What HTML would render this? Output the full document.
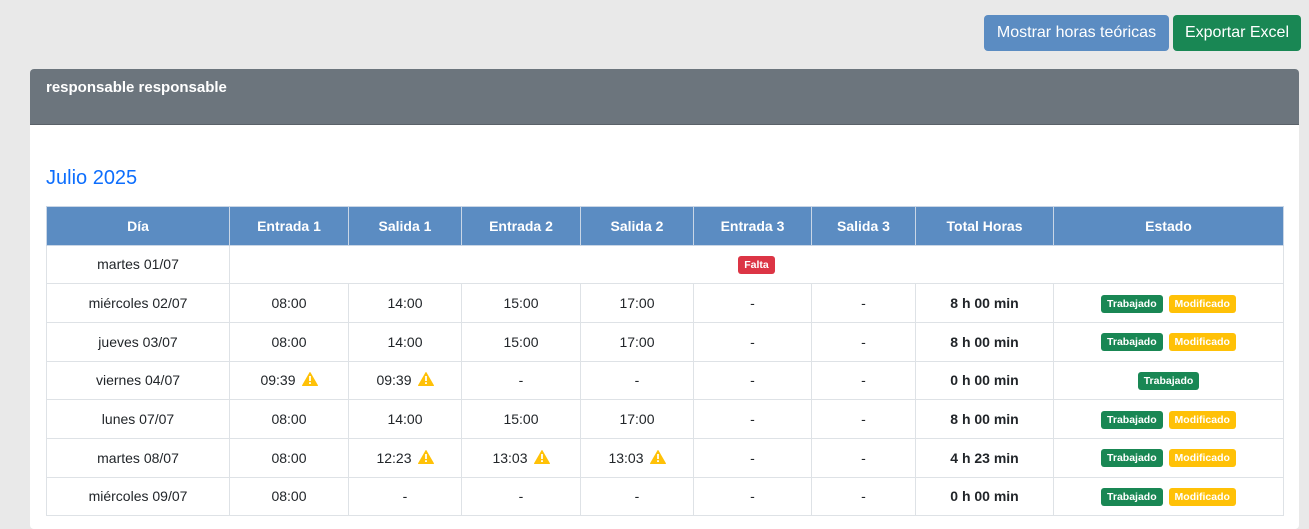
<!DOCTYPE html>
<html><head><meta charset="utf-8"><style>
body{margin:0;background:#e9e9e9;font-family:"Liberation Sans",Arial,sans-serif;width:1309px;height:516px;overflow:hidden;position:relative}
.btn{position:absolute;top:15px;height:36px;border-radius:4px;color:#fff;font-size:16px;line-height:36px;text-align:center}
.card{position:absolute;left:30px;top:69px;width:1269px;height:460px;background:#fff;border-radius:4px;overflow:hidden}
.ch{height:56px;background:#6c757d;color:#fff;font-weight:bold;font-size:15px;padding:10px 16px;box-sizing:border-box;border-bottom:1px solid #5a6168}
h2{position:absolute;left:16px;top:98px;margin:0;font-weight:normal;color:#0d6efd;font-size:20px}
table{position:absolute;left:16px;top:137px;border-collapse:collapse;width:1237px;font-size:14px;color:#212529;table-layout:fixed}
td,th{border:1px solid #dee2e6;text-align:center;height:38.7px;padding:0;box-sizing:border-box}
th{background:#5b8cc2;color:#fff;font-size:14px;border-color:#c9d6e6;height:38.5px}
.b{font-weight:bold}
.bd{display:inline-block;font-size:10.5px;font-weight:bold;color:#fff;border-radius:3px;padding:3px 6px;line-height:12px;margin:0 1px}
.g{background:#198754}.y{background:#ffc107}.r{background:#dc3545}
.w{display:inline-block;width:16px;height:14px;vertical-align:-1px;margin-left:6px}
</style></head><body>
<div class="btn" style="left:984px;width:185px;background:#5b8cc2">Mostrar horas teóricas</div>
<div class="btn" style="left:1173px;width:128px;background:#198754">Exportar Excel</div>
<div class="card">
<div class="ch">responsable responsable</div>
<h2>Julio 2025</h2>
<table>
<colgroup><col style="width:183px"><col style="width:119px"><col style="width:113px"><col style="width:119px"><col style="width:113px"><col style="width:118px"><col style="width:104px"><col style="width:138px"><col style="width:230px"></colgroup>
<tr><th>Día</th><th>Entrada 1</th><th>Salida 1</th><th>Entrada 2</th><th>Salida 2</th><th>Entrada 3</th><th>Salida 3</th><th>Total Horas</th><th>Estado</th></tr>
<tr><td>martes 01/07</td><td colspan="8"><span class="bd r">Falta</span></td></tr>
<tr><td>miércoles 02/07</td><td>08:00</td><td>14:00</td><td>15:00</td><td>17:00</td><td>-</td><td>-</td><td class="b">8 h 00 min</td><td><span class="bd g">Trabajado</span> <span class="bd y">Modificado</span></td></tr>
<tr><td>jueves 03/07</td><td>08:00</td><td>14:00</td><td>15:00</td><td>17:00</td><td>-</td><td>-</td><td class="b">8 h 00 min</td><td><span class="bd g">Trabajado</span> <span class="bd y">Modificado</span></td></tr>
<tr><td>viernes 04/07</td><td>09:39<svg class="w" viewBox="0 0 16 14"><path d="M8 0.5L15.5 13.5H0.5Z" fill="#ffc107" stroke="#ffc107" stroke-linejoin="round"/><rect x="7.1" y="4" width="1.8" height="5" fill="#fff"/><rect x="7.1" y="10.2" width="1.8" height="1.8" fill="#fff"/></svg></td><td>09:39<svg class="w" viewBox="0 0 16 14"><path d="M8 0.5L15.5 13.5H0.5Z" fill="#ffc107" stroke="#ffc107" stroke-linejoin="round"/><rect x="7.1" y="4" width="1.8" height="5" fill="#fff"/><rect x="7.1" y="10.2" width="1.8" height="1.8" fill="#fff"/></svg></td><td>-</td><td>-</td><td>-</td><td>-</td><td class="b">0 h 00 min</td><td><span class="bd g">Trabajado</span></td></tr>
<tr><td>lunes 07/07</td><td>08:00</td><td>14:00</td><td>15:00</td><td>17:00</td><td>-</td><td>-</td><td class="b">8 h 00 min</td><td><span class="bd g">Trabajado</span> <span class="bd y">Modificado</span></td></tr>
<tr><td>martes 08/07</td><td>08:00</td><td>12:23<svg class="w" viewBox="0 0 16 14"><path d="M8 0.5L15.5 13.5H0.5Z" fill="#ffc107" stroke="#ffc107" stroke-linejoin="round"/><rect x="7.1" y="4" width="1.8" height="5" fill="#fff"/><rect x="7.1" y="10.2" width="1.8" height="1.8" fill="#fff"/></svg></td><td>13:03<svg class="w" viewBox="0 0 16 14"><path d="M8 0.5L15.5 13.5H0.5Z" fill="#ffc107" stroke="#ffc107" stroke-linejoin="round"/><rect x="7.1" y="4" width="1.8" height="5" fill="#fff"/><rect x="7.1" y="10.2" width="1.8" height="1.8" fill="#fff"/></svg></td><td>13:03<svg class="w" viewBox="0 0 16 14"><path d="M8 0.5L15.5 13.5H0.5Z" fill="#ffc107" stroke="#ffc107" stroke-linejoin="round"/><rect x="7.1" y="4" width="1.8" height="5" fill="#fff"/><rect x="7.1" y="10.2" width="1.8" height="1.8" fill="#fff"/></svg></td><td>-</td><td>-</td><td class="b">4 h 23 min</td><td><span class="bd g">Trabajado</span> <span class="bd y">Modificado</span></td></tr>
<tr><td>miércoles 09/07</td><td>08:00</td><td>-</td><td>-</td><td>-</td><td>-</td><td>-</td><td class="b">0 h 00 min</td><td><span class="bd g">Trabajado</span> <span class="bd y">Modificado</span></td></tr>
</table>
</div>
</body></html>
